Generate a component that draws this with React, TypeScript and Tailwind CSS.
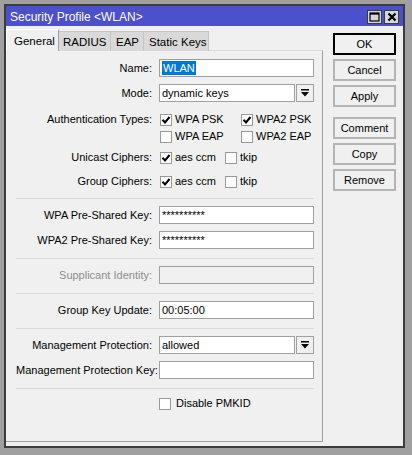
import type { ReactNode } from "react";

const FONT = { fontFamily: '"Liberation Sans", Arial, sans-serif' };

function Check({ checked = false }: { checked?: boolean }) {
  return (
    <span className="flex h-[12px] w-[12px] shrink-0 items-center justify-center border border-[#999999] bg-white">
      {checked && (
        <svg width="10" height="10" viewBox="0 0 10 10">
          <path d="M1.5 4.8 L4 7.5 L8.5 2" fill="none" stroke="#000" strokeWidth="2" />
        </svg>
      )}
    </span>
  );
}

function CheckItem({ label, checked, width }: { label: string; checked?: boolean; width?: string }) {
  return (
    <div className={`flex items-center gap-[3px] ${width ?? ""}`}>
      <Check checked={checked} />
      <span>{label}</span>
    </div>
  );
}

function Field({
  label,
  children,
  disabled = false,
  className = "h-[18px]",
}: {
  label: string;
  children?: ReactNode;
  disabled?: boolean;
  className?: string;
}) {
  return (
    <div className={`flex items-center ${className}`}>
      <div className={`w-[137px] pr-[1px] text-right whitespace-nowrap ${disabled ? "text-[#8d8d8d]" : "text-black"}`}>
        {label}
      </div>
      <div className="ml-[6px] flex w-[155px] items-center">{children}</div>
    </div>
  );
}

function TextBox({ children, disabled = false }: { children?: ReactNode; disabled?: boolean }) {
  return (
    <div
      className={`flex h-[18px] w-full items-center overflow-hidden border border-[#a0a0a0] px-[2px] leading-[16px] ${
        disabled ? "bg-[#f0f0f0]" : "bg-white"
      }`}
    >
      {children}
    </div>
  );
}

function DropDown({ value }: { value: string }) {
  return (
    <div className="flex w-full gap-[1px]">
      <div className="flex h-[18px] flex-1 items-center border border-[#a0a0a0] bg-white px-[2px]">{value}</div>
      <div className="flex h-[18px] w-[18px] items-center justify-center border border-[#a0a0a0] bg-[#f0f0f0]">
        <svg width="10" height="10" viewBox="0 0 10 10">
          <rect x="1" y="1" width="8" height="1.5" fill="#000" />
          <path d="M1 4 L9 4 L5 8.5 Z" fill="#000" />
        </svg>
      </div>
    </div>
  );
}

function Separator({ className }: { className: string }) {
  return <div className={`h-[1px] w-[298px] bg-[#d9d9d9] ${className}`} />;
}

function SideButton({ label, primary = false, className = "" }: { label: string; primary?: boolean; className?: string }) {
  return (
    <button
      type="button"
      className={`flex h-[22px] w-[63px] items-center justify-center bg-[#f0f0f0] text-[11px] text-black ${
        primary ? "border-2 border-black" : "border-2 border-[#b4b4b4]"
      } ${className}`}
    >
      {label}
    </button>
  );
}

export default function App() {
  return (
    <div className="h-[455px] w-[412px] bg-[#a0a0a0] pl-[4px] pt-[4px] text-[11px] text-black" style={FONT}>
      <div className="flex h-[444px] w-[401px] flex-col border-2 border-[#3c3c3c] bg-[#f0f0f0]">
        {/* title bar */}
        <div className="flex h-[20px] items-center justify-between bg-[#4b50cc] pl-[4px] pr-[4px]">
          <span className="pt-[1px] text-[12px] text-white">Security Profile &lt;WLAN&gt;</span>
          <div className="flex gap-[2px] pt-[2px]">
            <span className="flex h-[14px] w-[15px] items-center justify-center border border-[#3c3c3c] bg-[#d6d6d6]">
              <svg width="11" height="10" viewBox="0 0 11 10">
                <rect x="1" y="1" width="9" height="8" fill="none" stroke="#000" strokeWidth="1.2" />
                <rect x="1" y="1" width="9" height="1.6" fill="#000" />
              </svg>
            </span>
            <span className="flex h-[14px] w-[15px] items-center justify-center border border-[#3c3c3c] bg-[#d6d6d6]">
              <svg width="10" height="10" viewBox="0 0 10 10">
                <path d="M1.5 1.5 L8.5 8.5 M8.5 1.5 L1.5 8.5" stroke="#000" strokeWidth="2.2" />
              </svg>
            </span>
          </div>
        </div>

        {/* body */}
        <div className="flex flex-1">
          <div className="flex w-[317px] flex-col pt-[3px]">
            {/* tabs */}
            <div className="relative z-10 flex h-[22px] items-end">
              <div className="flex h-[22px] w-[53px] items-start border-l border-r border-t border-l-white border-r-[#a0a0a0] border-t-white bg-[#f0f0f0] pl-[7px] pt-[3px] text-[11.5px]">
                General
              </div>
              <div className="flex h-[20px] w-[52px] items-start border-r border-t border-[#c4c4c4] bg-[#d9d9d9] pl-[4px] pt-[2px] text-[11.5px]">
                RADIUS
              </div>
              <div className="flex h-[20px] w-[33px] items-start border-r border-t border-[#c4c4c4] bg-[#d9d9d9] pl-[5px] pt-[2px] text-[11.5px]">
                EAP
              </div>
              <div className="flex h-[20px] w-[65px] items-start border-r border-t border-[#c4c4c4] bg-[#d9d9d9] pl-[5px] pt-[2px] text-[11.5px]">
                Static Keys
              </div>
            </div>

            {/* panel */}
            <div className="-mt-[1px] flex h-[392px] flex-col border-b border-r border-t border-b-[#a0a0a0] border-r-[#a0a0a0] border-t-[#dadada] pl-[10px]">
              <Field label="Name:" className="mt-[8px] h-[18px]">
                <TextBox>
                  <span className="bg-[#0078d7] px-[1px] leading-[14px] text-white">WLAN</span>
                </TextBox>
              </Field>
              <Field label="Mode:" className="mt-[7px] h-[18px]">
                <DropDown value="dynamic keys" />
              </Field>
              <Field label="Authentication Types:" className="mt-[9px] h-[17px]">
                <div className="ml-[1px] flex">
                  <CheckItem label="WPA PSK" checked width="w-[81px]" />
                  <CheckItem label="WPA2 PSK" checked />
                </div>
              </Field>
              <Field label="" className="h-[17px]">
                <div className="ml-[1px] flex">
                  <CheckItem label="WPA EAP" width="w-[81px]" />
                  <CheckItem label="WPA2 EAP" />
                </div>
              </Field>
              <Field label="Unicast Ciphers:" className="mt-[4px] h-[17px]">
                <div className="ml-[1px] flex">
                  <CheckItem label="aes ccm" checked width="w-[65px]" />
                  <CheckItem label="tkip" />
                </div>
              </Field>
              <Field label="Group Ciphers:" className="mt-[7px] h-[17px]">
                <div className="ml-[1px] flex">
                  <CheckItem label="aes ccm" checked width="w-[65px]" />
                  <CheckItem label="tkip" />
                </div>
              </Field>

              <Separator className="mt-[8px]" />

              <Field label="WPA Pre-Shared Key:" className="mt-[7px] h-[18px]">
                <TextBox>
                  <span className="text-[11px]">**********</span>
                </TextBox>
              </Field>
              <Field label="WPA2 Pre-Shared Key:" className="mt-[7px] h-[18px]">
                <TextBox>
                  <span className="text-[11px]">**********</span>
                </TextBox>
              </Field>

              <Separator className="mt-[9px]" />

              <Field label="Supplicant Identity:" disabled className="mt-[7px] h-[18px]">
                <TextBox disabled />
              </Field>

              <Separator className="mt-[9px]" />

              <Field label="Group Key Update:" className="mt-[7px] h-[18px]">
                <TextBox>00:05:00</TextBox>
              </Field>

              <Separator className="mt-[9px]" />

              <Field label="Management Protection:" className="mt-[7px] h-[18px]">
                <DropDown value="allowed" />
              </Field>
              <Field label="Management Protection Key:" className="mt-[7px] h-[18px]">
                <TextBox />
              </Field>

              <Separator className="mt-[9px]" />

              <Field label="" className="mt-[6px] h-[17px]">
                <div className="flex items-center gap-[5px]">
                  <Check />
                  <span>Disable PMKID</span>
                </div>
              </Field>
            </div>
          </div>

          {/* buttons */}
          <div className="ml-[10px] flex flex-col gap-[4px] pt-[7px]">
            <SideButton label="OK" primary />
            <SideButton label="Cancel" />
            <SideButton label="Apply" />
            <SideButton label="Comment" className="mt-[6px]" />
            <SideButton label="Copy" />
            <SideButton label="Remove" />
          </div>
        </div>
      </div>
    </div>
  );
}
